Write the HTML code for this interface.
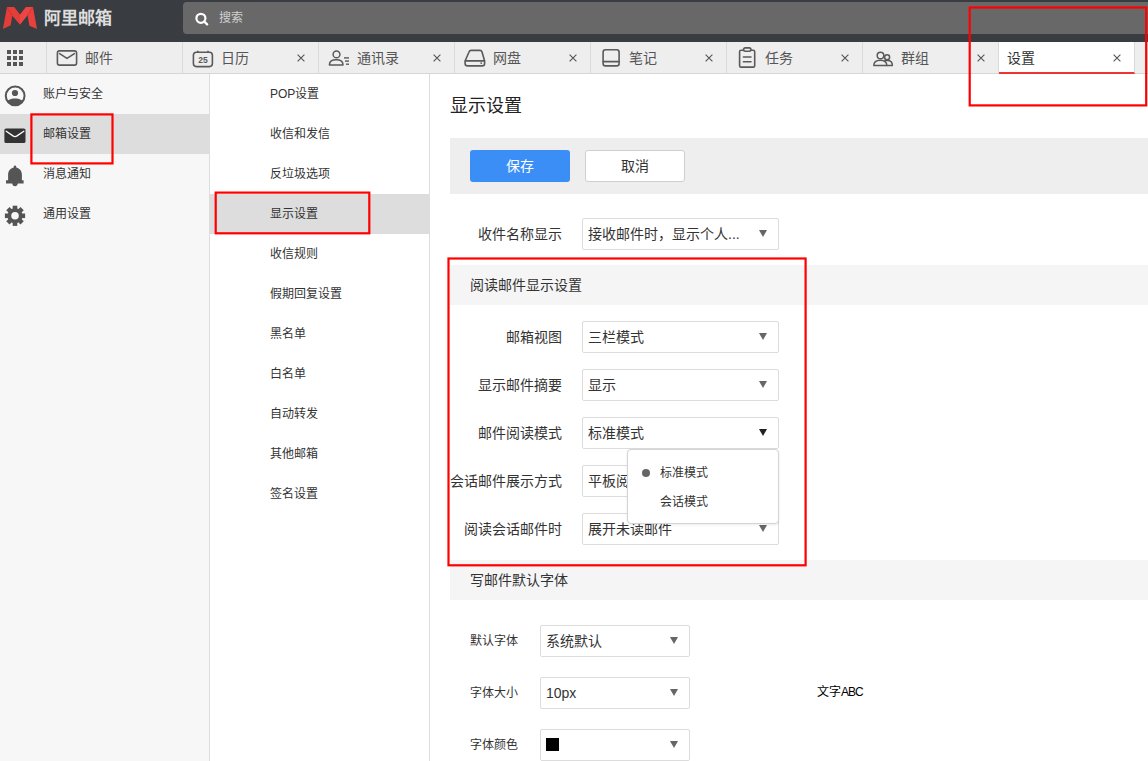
<!DOCTYPE html>
<html lang="zh-CN"><head><meta charset="utf-8">
<style>
*{margin:0;padding:0;box-sizing:border-box}
html,body{width:1148px;height:761px;overflow:hidden;background:#fff;font-family:"Liberation Sans",sans-serif;color:#333}
.a{position:absolute}
#top{left:0;top:0;width:1148px;height:42px;background:#393d41}
#search{left:183px;top:2px;width:980px;height:32px;background:#686868;border-radius:4px}
#tabs{left:0;top:42px;width:1148px;height:32px;background:#eeeeee;border-bottom:1px solid #d6d6d6}
.tab{position:absolute;top:0;height:31px;width:136px;border-right:1px solid #d9d9d9}
.tab .t{position:absolute;left:38px;top:8px;font-size:14px;color:#555;line-height:16px;white-space:nowrap}
.tab .x{position:absolute;left:114px;top:12px;width:8px;height:8px}
#left{left:0;top:74px;width:210px;height:687px;background:#f7f7f7;border-right:1px solid #dddddd}
.li{position:absolute;left:0;width:209px;height:40px}
.li .t{position:absolute;left:43px;top:13px;font-size:12px;line-height:14px;color:#333}
#mid{left:210px;top:74px;width:220px;height:687px;background:#fff;border-right:1px solid #dddddd}
.mi{position:absolute;left:0;width:219px;height:40px}
.mi .t{position:absolute;left:60px;top:13px;font-size:12px;line-height:14px;color:#333}
.on{background:#dddddd}
.red{position:absolute;border:2px solid #ee1c1c}
.lbl{position:absolute;font-size:14px;line-height:16px;color:#333;white-space:nowrap}
.sel{position:absolute;height:32px;border:1px solid #dcdcdc;background:#fff;border-radius:2px}
.sel .v{position:absolute;left:5px;top:7px;font-size:14px;line-height:16px;color:#333;white-space:nowrap}
.sel .ar{position:absolute;right:11px;top:11px;width:0;height:0;border-left:4px solid transparent;border-right:4px solid transparent;border-top:7px solid #666}
.sec{position:absolute;left:450px;width:698px;height:40px;background:#f5f5f5}
.sec .t{position:absolute;left:20px;top:12px;font-size:14px;line-height:16px;color:#333}
</style></head><body>

<div id="top" class="a">
  <svg class="a" style="left:0;top:0" width="42" height="36" viewBox="0 0 42 36">
    <polygon points="7,7.1 14,7.1 20,14.7 20,24.6 12.3,15.4 10.7,25.3 2.9,29" fill="#e33d3a"/>
    <polygon points="33,7.1 26.1,7.1 20,14.7 20,24.6 27.6,15 29.4,25.7 37,29" fill="#e7403d"/>
    <polygon points="7,7.1 14,7.1 20,14.7 20,24.6 12.3,15.4" fill="#e43e3b"/>
    <polygon points="33,7.1 26.1,7.1 20,14.7 20,24.6 27.6,15" fill="#ec4543"/>
    <line x1="7.3" y1="7.5" x2="12.3" y2="15.4" stroke="#cc3331" stroke-width="1.2" opacity=".6"/>
    <line x1="32.7" y1="7.5" x2="27.6" y2="15" stroke="#cc3331" stroke-width="1.2" opacity=".6"/>
  </svg>
  <div class="a" style="left:44px;top:8.5px;font-size:17px;line-height:20px;color:#dedede;letter-spacing:0px;font-weight:bold">阿里邮箱</div>
  <div id="search" class="a">
    <svg class="a" style="left:10px;top:8px" width="20" height="20" viewBox="193 10 20 20">
      <circle cx="200.9" cy="18.3" r="4.5" fill="none" stroke="#fff" stroke-width="2.2"/>
      <line x1="204.3" y1="21.7" x2="207.2" y2="24.4" stroke="#fff" stroke-width="2.3" stroke-linecap="round"/>
    </svg>
    <div class="a" style="left:36px;top:9px;font-size:12px;line-height:14px;color:#d0d0d0">搜索</div>
  </div>
</div>

<div id="tabs" class="a">
  <div class="tab" style="left:0;width:47px">
    <svg class="a" style="left:7px;top:8px" width="17" height="16" viewBox="0 0 17 16">
      <g fill="#555"><rect x="0" y="0" width="4" height="4"/><rect x="6" y="0" width="4" height="4"/><rect x="12" y="0" width="4" height="4"/>
      <rect x="0" y="6" width="4" height="4"/><rect x="6" y="6" width="4" height="4"/><rect x="12" y="6" width="4" height="4"/>
      <rect x="0" y="12" width="4" height="4"/><rect x="6" y="12" width="4" height="4"/><rect x="12" y="12" width="4" height="4"/></g>
    </svg>
  </div>
  <div class="tab" style="left:47px">
    <div class="t">邮件</div>
  </div>
  <div class="tab" style="left:183px">
    <div class="t">日历</div>
  </div>
  <div class="tab" style="left:319px">
    <div class="t">通讯录</div>
  </div>
  <div class="tab" style="left:455px">
    <div class="t">网盘</div>
  </div>
  <div class="tab" style="left:591px">
    <div class="t">笔记</div>
  </div>
  <div class="tab" style="left:727px">
    <div class="t">任务</div>
  </div>
  <div class="tab" style="left:863px">
    <div class="t">群组</div>
  </div>
  <div class="tab" style="left:999px;background:#fff;height:32px;border-bottom:2px solid #e33">
    <div class="t" style="left:8px;color:#333">设置</div>
  </div>
</div>

<div id="left" class="a">
  <div class="li" style="top:0"><div class="t">账户与安全</div></div>
  <div class="li on" style="top:40px"><div class="t">邮箱设置</div></div>
  <div class="li" style="top:80px"><div class="t">消息通知</div></div>
  <div class="li" style="top:120px"><div class="t">通用设置</div></div>
</div>

<div id="mid" class="a">
  <div class="mi" style="top:0"><div class="t">POP设置</div></div>
  <div class="mi" style="top:40px"><div class="t">收信和发信</div></div>
  <div class="mi" style="top:80px"><div class="t">反垃圾选项</div></div>
  <div class="mi on" style="top:120px"><div class="t">显示设置</div></div>
  <div class="mi" style="top:160px"><div class="t">收信规则</div></div>
  <div class="mi" style="top:200px"><div class="t">假期回复设置</div></div>
  <div class="mi" style="top:240px"><div class="t">黑名单</div></div>
  <div class="mi" style="top:280px"><div class="t">白名单</div></div>
  <div class="mi" style="top:320px"><div class="t">自动转发</div></div>
  <div class="mi" style="top:360px"><div class="t">其他邮箱</div></div>
  <div class="mi" style="top:400px"><div class="t">签名设置</div></div>
</div>


<svg class="a" style="left:0;top:0" width="1148" height="240" viewBox="0 0 1148 240">
 <g fill="none" stroke="#5a5a5a" stroke-width="1.6" stroke-linejoin="round" stroke-linecap="round">
  <!-- mail -->
  <rect x="57.4" y="50.9" width="19.2" height="14.2" rx="2.2"/>
  <path d="M59.6,53.6 L67,58.4 L74.4,53.6"/>
  <!-- calendar -->
  <rect x="193.4" y="52.3" width="19" height="14.3" rx="3"/>
  <path d="M197.8,50.7 L197.8,52.5 M208,50.7 L208,52.5" stroke-linecap="butt"/>
  <!-- contacts -->
  <circle cx="336.5" cy="54.4" r="3.4" stroke-width="1.5"/>
  <path d="M329.4,65 C329.4,61.2 332.2,59.8 336.2,59.8 C340.2,59.8 343,61.2 343,65 Z" stroke-width="1.5"/>
  <!-- disk -->
  <path d="M471.2,50.4 L480,50.4 Q481.6,50.4 482.1,52.2 L484.6,61 L484.6,63.4 Q484.6,65.9 482.1,65.9 L467.6,65.9 Q465.1,65.9 465.1,63.4 L465.1,61 L468.9,52.2 Q469.5,50.4 471.2,50.4 Z"/>
  <path d="M465.4,60.9 L484.4,60.9"/>
  <!-- note -->
  <rect x="603.1" y="49.8" width="16" height="16.1" rx="2.4"/>
  <path d="M603.2,61.6 L619,61.6"/>
  <!-- task -->
  <rect x="739.6" y="50.3" width="15.1" height="16.8" rx="1.4"/>
  <rect x="743.6" y="47.9" width="7.3" height="3.4" rx="1.7" fill="#eeeeee"/>
  <path d="M743.4,57 L751,57 M743.4,61.7 L751,61.7"/>
  <!-- group -->
  <circle cx="880.5" cy="55.5" r="3.3" stroke-width="1.5"/>
  <circle cx="887.1" cy="57.2" r="2.5" stroke-width="1.5"/>
  <path d="M873.8,65.6 C873.8,61.6 876.6,60.3 880.3,60.3 C884,60.3 886.8,61.6 886.8,65.6 Z" stroke-width="1.5"/>
  <path d="M885,60.6 C885.8,60.4 886.6,60.4 887.4,60.4 C890.6,60.4 892.4,61.8 892.4,65.6 L886.8,65.6" stroke-width="1.5"/>
 </g>
 <text x="203" y="63.3" text-anchor="middle" font-family="Liberation Sans" font-weight="bold" font-size="8.5" fill="#5a5a5a">25</text>
 <g fill="#5a5a5a">
  <rect x="344" y="57.2" width="5" height="1.4"/>
  <rect x="345" y="60.4" width="4" height="1.4"/>
  <rect x="346" y="63.5" width="3" height="1.4"/>
  <circle cx="481.2" cy="63.1" r="0.9"/>
 </g>
 <g stroke="#555" stroke-width="1.1" fill="none">
  <path d="M297.6,54.6 L304.4,61.4 M304.4,54.6 L297.6,61.4"/>
  <path d="M433.6,54.6 L440.4,61.4 M440.4,54.6 L433.6,61.4"/>
  <path d="M569.6,54.6 L576.4,61.4 M576.4,54.6 L569.6,61.4"/>
  <path d="M705.6,54.6 L712.4,61.4 M712.4,54.6 L705.6,61.4"/>
  <path d="M841.6,54.6 L848.4,61.4 M848.4,54.6 L841.6,61.4"/>
  <path d="M977.6,54.6 L984.4,61.4 M984.4,54.6 L977.6,61.4"/>
  <path d="M1113.6,54.6 L1120.4,61.4 M1120.4,54.6 L1113.6,61.4"/>
 </g>
 <!-- sidebar icons -->
 <circle cx="15.15" cy="95.85" r="9.4" fill="none" stroke="#555" stroke-width="2"/>
 <circle cx="15" cy="93" r="3.1" fill="#555"/>
 <clipPath id="cc"><circle cx="15.15" cy="95.85" r="9.5"/></clipPath>
 <path clip-path="url(#cc)" d="M6,108 L6,103 C7,100 10.5,98.4 15,98.4 C19.5,98.4 23,100 24.3,103 L24.3,108 Z" fill="#555"/>
 <rect x="4.4" y="128.5" width="21.1" height="14.6" rx="1.6" fill="#333"/>
 <path d="M6.2,131.2 L13,135.9 Q15,137.2 17,135.9 L23.8,131.2" fill="none" stroke="#fff" stroke-width="1.3" stroke-linecap="round"/>
 <path d="M15,165.6 C16.2,165.6 16.3,166.6 16.3,167.4 C19.8,168.2 21.9,171 21.9,174.5 L21.9,180.2 L23.6,180.2 L23.6,183.5 L17.8,183.5 C17.6,185.1 16.6,186.2 15,186.2 C13.4,186.2 12.4,185.1 12.2,183.5 L6,183.5 L6,180.2 L8.1,180.2 L8.1,174.5 C8.1,171 10.2,168.2 13.7,167.4 C13.7,166.6 13.8,165.6 15,165.6 Z" fill="#555"/>
 <g transform="translate(15,215.8)" fill="#555"><circle r="7.5"/><rect x="-2.3" y="-10.1" width="4.6" height="5" transform="rotate(0)"/><rect x="-2.3" y="-10.1" width="4.6" height="5" transform="rotate(45)"/><rect x="-2.3" y="-10.1" width="4.6" height="5" transform="rotate(90)"/><rect x="-2.3" y="-10.1" width="4.6" height="5" transform="rotate(135)"/><rect x="-2.3" y="-10.1" width="4.6" height="5" transform="rotate(180)"/><rect x="-2.3" y="-10.1" width="4.6" height="5" transform="rotate(225)"/><rect x="-2.3" y="-10.1" width="4.6" height="5" transform="rotate(270)"/><rect x="-2.3" y="-10.1" width="4.6" height="5" transform="rotate(315)"/><circle r="3.8" fill="#f7f7f7"/></g>
</svg>
<!-- content -->
<div class="a" style="left:450px;top:96px;font-size:18px;line-height:20px;color:#222">显示设置</div>
<div class="a" style="left:450px;top:138px;width:698px;height:56px;background:#eeeeee"></div>
<div class="a" style="left:470px;top:150px;width:100px;height:32px;background:#3a8ef6;border-radius:3px;color:#fff;font-size:14px;line-height:32px;text-align:center">保存</div>
<div class="a" style="left:585px;top:150px;width:100px;height:32px;background:#fff;border:1px solid #cfcfcf;border-radius:3px;color:#333;font-size:14px;line-height:30px;text-align:center">取消</div>

<div class="lbl" style="left:478px;top:226px">收件名称显示</div>
<div class="sel" style="left:582px;top:218px;width:197px"><div class="v">接收邮件时，显示个人...</div><div class="ar"></div></div>

<div class="sec" style="top:265px"><div class="t">阅读邮件显示设置</div></div>

<div class="lbl" style="left:506px;top:329px">邮箱视图</div>
<div class="sel" style="left:582px;top:321px;width:197px"><div class="v">三栏模式</div><div class="ar"></div></div>
<div class="lbl" style="left:478px;top:377px">显示邮件摘要</div>
<div class="sel" style="left:582px;top:369px;width:197px"><div class="v">显示</div><div class="ar"></div></div>
<div class="lbl" style="left:478px;top:425px">邮件阅读模式</div>
<div class="sel" style="left:582px;top:417px;width:197px"><div class="v">标准模式</div><div class="ar" style="border-top-color:#222"></div></div>
<div class="lbl" style="left:450px;top:473px">会话邮件展示方式</div>
<div class="sel" style="left:582px;top:465px;width:197px"><div class="v">平板阅读</div><div class="ar"></div></div>
<div class="lbl" style="left:464px;top:521px">阅读会话邮件时</div>
<div class="sel" style="left:582px;top:513px;width:197px"><div class="v">展开未读邮件</div><div class="ar"></div></div>

<div class="a" style="left:627px;top:449px;width:152px;height:75px;background:#fff;border:1px solid #d4d4d4;border-radius:4px;box-shadow:0 1px 3px rgba(0,0,0,.08)">
  <div class="a" style="left:14px;top:19px;width:8px;height:8px;border-radius:50%;background:#666"></div>
  <div class="a" style="left:32px;top:16px;font-size:12px;line-height:14px;color:#333">标准模式</div>
  <div class="a" style="left:32px;top:45px;font-size:12px;line-height:14px;color:#333">会话模式</div>
</div>


<div class="sec" style="top:560px"><div class="t">写邮件默认字体</div></div>

<div class="lbl" style="left:470px;top:633px;font-size:12px">默认字体</div>
<div class="sel" style="left:540px;top:625px;width:150px"><div class="v">系统默认</div><div class="ar"></div></div>
<div class="lbl" style="left:470px;top:685px;font-size:12px">字体大小</div>
<div class="sel" style="left:540px;top:677px;width:150px"><div class="v">10px</div><div class="ar"></div></div>
<div class="lbl" style="left:817px;top:684px;font-size:12px;color:#000">文字<span style="letter-spacing:-1px">ABC</span></div>
<div class="lbl" style="left:470px;top:737px;font-size:12px">字体颜色</div>
<div class="sel" style="left:540px;top:729px;width:150px"><div class="a" style="left:5px;top:8px;width:13px;height:13px;background:#000"></div><div class="ar"></div></div>


<svg class="a" style="left:0;top:0" width="1148" height="761" viewBox="0 0 1148 761">
 <g fill="none" stroke="#ff0000" stroke-width="2.2">
  <rect x="31.4" y="114.4" width="81.1" height="49"/>
  <rect x="215.7" y="192.6" width="153.6" height="40.7"/>
  <rect x="448.5" y="258.5" width="357.1" height="306.8"/>
  <rect x="969.7" y="7.5" width="176.5" height="97.9"/>
 </g>
</svg>
</body></html>
